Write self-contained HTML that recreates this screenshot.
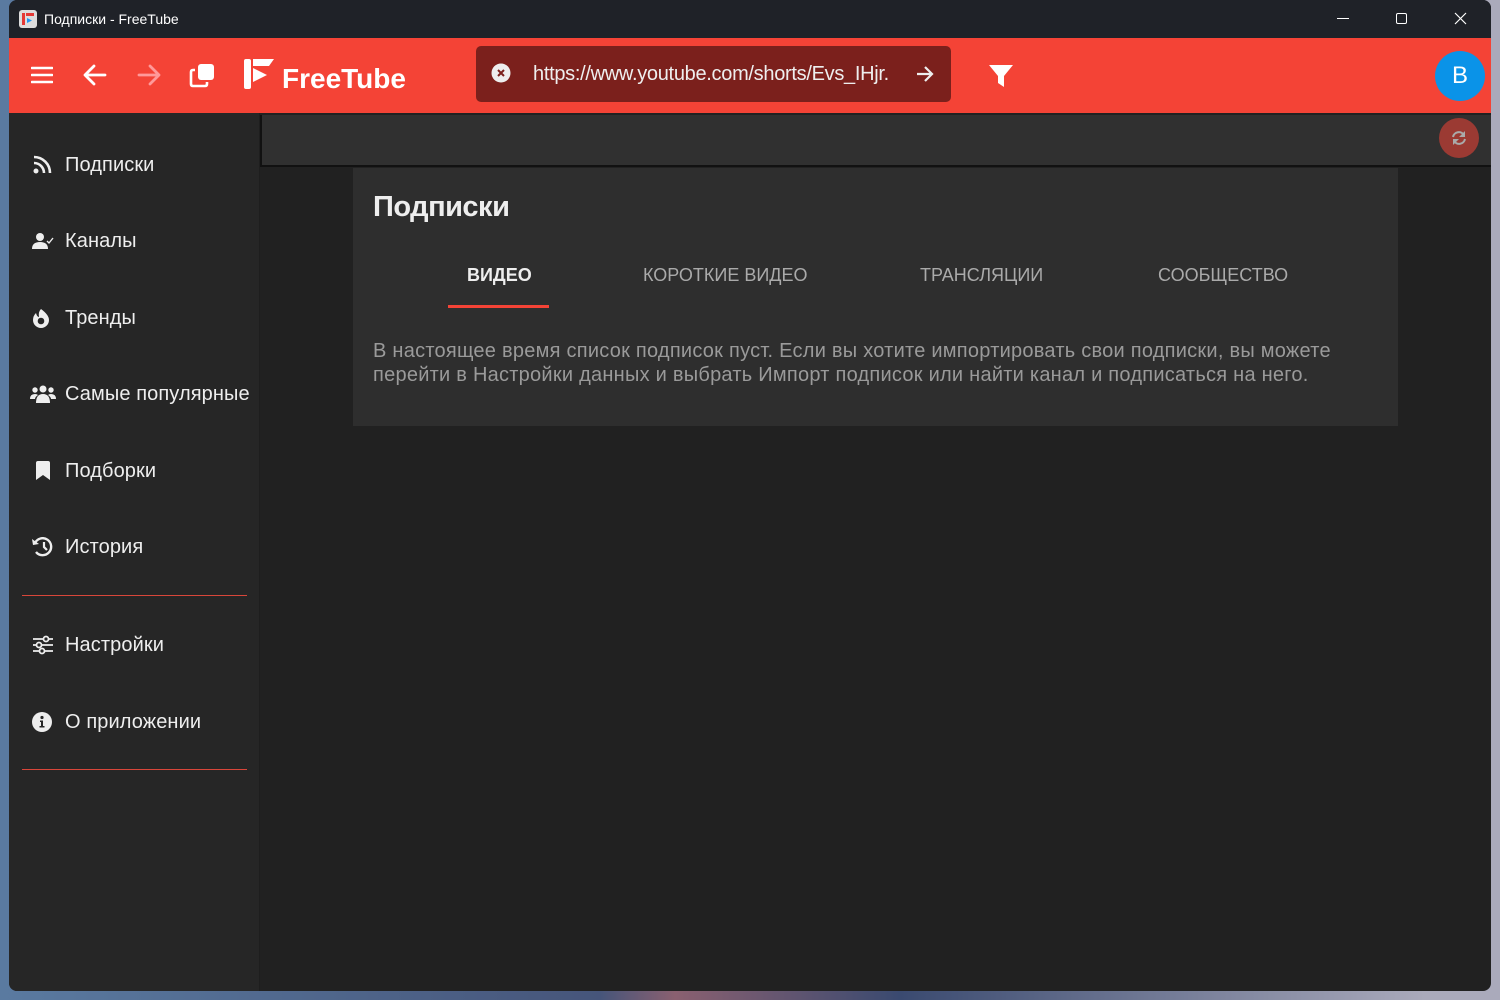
<!DOCTYPE html>
<html><head><meta charset="utf-8"><style>
*{margin:0;padding:0;box-sizing:border-box}
body{width:1500px;height:1000px;overflow:hidden;position:relative;font-family:"Liberation Sans","Noto Sans CJK SC",sans-serif;background:linear-gradient(90deg,#5a7aa0,#46557a 40%,#8a6070 45%,#3a4a70 60%,#aab 95%)}
.win{position:absolute;left:9px;top:0;width:1482px;height:991px;background:#212121;border-radius:8px;overflow:hidden}
.title{position:absolute;left:0;top:0;width:100%;height:38px;background:#1f2228;color:#fff;font-size:14px}
.hdr{position:absolute;left:0;top:38px;width:100%;height:75px;background:#f44336}
.side{position:absolute;left:0;top:113px;width:250px;height:878px;background:#262626}
.item{position:absolute;left:0;height:30px;color:#eee;font-size:20px;display:flex;align-items:center}
.item svg{position:absolute;left:23px;fill:#eee}
.item span{position:absolute;left:56px;white-space:nowrap;letter-spacing:0.1px}
.hr{position:absolute;left:13px;width:225px;height:1px;background:#d8463a}
.top{position:absolute;left:251px;top:115px;width:1231px;height:52px;background:#303030;border-left:2px solid #111;border-bottom:2px solid #111}
.card{position:absolute;left:344px;top:168px;width:1045px;height:258px;background:#2e2e2e}
.tab{position:absolute;top:97px;font-size:18px;color:#aaa}
</style></head><body>
<div class="win">
 <div class="title">
  <svg style="position:absolute;left:10px;top:10px" width="18" height="18" viewBox="0 0 18 18"><rect width="18" height="18" rx="3" fill="#ddd"/><rect x="3" y="3" width="3" height="12" fill="#e53935"/><rect x="7" y="3" width="8" height="3" fill="#e53935"/><path d="M8 8 L13 10.5 L8 13Z" fill="#2196f3"/></svg>
  <span style="position:absolute;left:35px;top:11px">Подписки - FreeTube</span>
  <div style="position:absolute;left:1328px;top:18px;width:12px;height:1px;background:#fff"></div>
  <div style="position:absolute;left:1387px;top:13px;width:11px;height:11px;border:1px solid #fff;border-radius:2px"></div>
  <svg style="position:absolute;left:1445px;top:12px" width="13" height="13"><path d="M1 1L12 12M12 1L1 12" stroke="#fff" stroke-width="1.2"/></svg>
 </div>
 <div class="hdr">
  <svg style="position:absolute;left:22px;top:28px" width="22" height="18"><path d="M1 2H21M1 9H21M1 16H21" stroke="#fff" stroke-width="2.6" stroke-linecap="round"/></svg>
  <svg style="position:absolute;left:74px;top:26px" width="24" height="22"><path d="M22 11H3M11 2L2 11L11 20" stroke="#fff" stroke-width="2.8" fill="none" stroke-linecap="round" stroke-linejoin="round"/></svg>
  <svg style="position:absolute;left:128px;top:26px" width="24" height="22"><path d="M2 11H21M13 2L22 11L13 20" stroke="#f99" stroke-width="2.8" fill="none" stroke-linecap="round" stroke-linejoin="round"/></svg>
  <svg style="position:absolute;left:180px;top:24px" width="28" height="28"><rect x="9" y="2" width="16" height="16" rx="3" fill="#fff"/><path d="M6 8H4Q2 8 2 10V22Q2 24 4 24H16Q18 24 18 22V20" stroke="#fff" stroke-width="2.6" fill="none"/></svg>
  <svg style="position:absolute;left:234px;top:20px" width="34" height="34"><rect x="1" y="1" width="7" height="30" rx="2" fill="#fff"/><path d="M10 1H31L26 8H10Z" fill="#fff"/><path d="M10 10L24 17L10 24Z" fill="#fff"/></svg>
  <span style="position:absolute;left:273px;top:25px;color:#fff;font-size:28px;font-weight:bold">FreeTube</span>
  <div style="position:absolute;left:467px;top:8px;width:475px;height:56px;background:#7b201c;border-radius:5px">
   <svg style="position:absolute;left:15px;top:17px" width="20" height="20"><circle cx="10" cy="10" r="9.5" fill="#eee"/><path d="M7 7L13 13M13 7L7 13" stroke="#7b201c" stroke-width="2"/></svg>
   <span style="position:absolute;left:57px;top:17px;color:#eee;font-size:20px;white-space:nowrap;width:366px;overflow:hidden;letter-spacing:-0.3px">https://www.youtube.com/shorts/Evs_IHjr.</span>
   <svg style="position:absolute;left:440px;top:19px" width="18" height="18"><path d="M1 9H16M9 2L16 9L9 16" stroke="#eee" stroke-width="2.2" fill="none"/></svg>
  </div>
  <svg style="position:absolute;left:979px;top:26px" width="26" height="24"><path d="M1 1H25L16 12V23L10 19V12Z" fill="#fff"/></svg>
  <div style="position:absolute;left:1426px;top:13px;width:50px;height:50px;border-radius:50%;background:#0a93e8;color:#fff;font-size:24px;text-align:center;line-height:50px">B</div>
 </div>
 <div class="side">
  <div class="item" style="top:37px"><svg width="20" height="20" viewBox="0 0 20 20"><circle cx="4" cy="16" r="2.5"/><path d="M2 8A10 10 0 0 1 12 18M2 2A16 16 0 0 1 18 18" stroke="#eee" stroke-width="2.6" fill="none"/></svg><span>Подписки</span></div>
  <div class="item" style="top:113px"><svg width="22" height="18" viewBox="0 0 22 18"><circle cx="8" cy="5" r="4"/><path d="M0 17Q0 10 8 10Q16 10 16 17Z"/><path d="M15 9L17 11L21 6" stroke="#eee" stroke-width="1.4" fill="none"/></svg><span>Каналы</span></div>
  <div class="item" style="top:190px"><svg width="18" height="20" viewBox="0 0 18 20"><path d="M9 1Q17 7 17 12A8 8 0 0 1 1 12Q1 8 4 5Q5 9 7 9Q6 4 9 1Z"/><circle cx="9" cy="13" r="3.3" fill="#262626"/></svg><span>Тренды</span></div>
  <div class="item" style="top:266px"><svg style="left:21px" width="26" height="20" viewBox="0 0 26 20"><circle cx="13" cy="5" r="3.5"/><circle cx="5" cy="6" r="2.7"/><circle cx="21" cy="6" r="2.7"/><path d="M6 19Q6 10 13 10Q20 10 20 19Z"/><path d="M0 15Q0 10 5 10Q7 10 8 11Q5 13 5 15Z"/><path d="M26 15Q26 10 21 10Q19 10 18 11Q21 13 21 15Z"/></svg><span>Самые популярные</span></div>
  <div class="item" style="top:343px"><svg style="left:26px" width="16" height="20" viewBox="0 0 16 20"><path d="M1 2Q1 0 3 0H13Q15 0 15 2V19L8 14L1 19Z"/></svg><span>Подборки</span></div>
  <div class="item" style="top:419px"><svg width="22" height="20" viewBox="0 0 22 20"><path d="M3 6A8.5 8.5 0 1 1 4 15" stroke="#eee" stroke-width="2.4" fill="none"/><path d="M0 2L1 8L7 7Z"/><path d="M12 5V10L15 13" stroke="#eee" stroke-width="2.2" fill="none"/></svg><span>История</span></div>
  <div class="hr" style="top:482px"></div>
  <div class="item" style="top:517px"><svg width="22" height="20" viewBox="0 0 22 20"><path d="M1 4H21M1 10H21M1 16H21" stroke="#eee" stroke-width="1.8"/><circle cx="14" cy="4" r="2.5" fill="#262626" stroke="#eee" stroke-width="1.8"/><circle cx="7" cy="10" r="2.5" fill="#262626" stroke="#eee" stroke-width="1.8"/><circle cx="10" cy="16" r="2.5" fill="#262626" stroke="#eee" stroke-width="1.8"/></svg><span>Настройки</span></div>
  <div class="item" style="top:594px"><svg width="20" height="20" viewBox="0 0 20 20"><circle cx="10" cy="10" r="10"/><circle cx="10" cy="5.5" r="1.6" fill="#262626"/><path d="M8 8.5H11V14H12.5V15.5H7.5V14H9V10H8Z" fill="#262626"/></svg><span>О приложении</span></div>
  <div class="hr" style="top:656px"></div>
 </div>
 <div style="position:absolute;left:250px;top:113px;width:1px;height:878px;background:#1e1e1e"></div>
 <div class="top">
  <div style="position:absolute;left:1177px;top:3px;width:40px;height:40px;border-radius:50%;background:#9b3a33">
   <svg style="position:absolute;left:12px;top:12px" width="16" height="16" viewBox="0 0 16 16"><path d="M2 7A6 6 0 0 1 13 5M14 9A6 6 0 0 1 3 11" stroke="#aaa" stroke-width="2" fill="none"/><path d="M14 1V7H8Z M2 15V9H8Z" fill="#aaa"/></svg>
  </div>
 </div>
 <div class="card">
  <div style="position:absolute;left:20px;top:23px;color:#eee;font-size:29px;font-weight:bold;letter-spacing:-0.5px">Подписки</div>
  <div class="tab" style="left:114px;color:#eee;font-weight:bold">ВИДЕО</div>
  <div style="position:absolute;left:95px;top:137px;width:101px;height:3px;background:#f44336"></div>
  <div class="tab" style="left:290px">КОРОТКИЕ ВИДЕО</div>
  <div class="tab" style="left:567px">ТРАНСЛЯЦИИ</div>
  <div class="tab" style="left:805px">СООБЩЕСТВО</div>
  <div style="position:absolute;left:20px;top:171px;width:990px;color:#9a9a9a;font-size:20px;line-height:24px;letter-spacing:0.25px">В настоящее время список подписок пуст. Если вы хотите импортировать свои подписки, вы можете перейти в Настройки данных и выбрать Импорт подписок или найти канал и подписаться на него.</div>
 </div>
</div>
</body></html>
